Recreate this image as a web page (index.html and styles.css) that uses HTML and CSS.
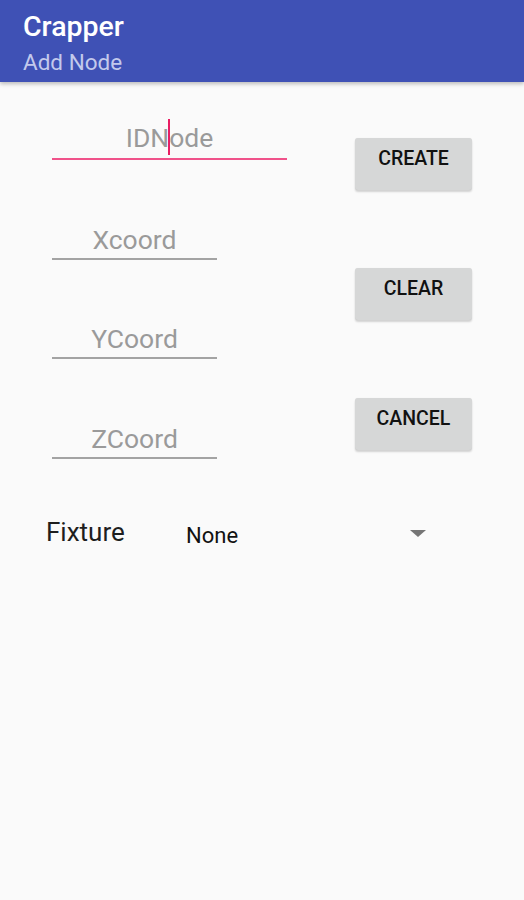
FILE: index.html
```html
<!DOCTYPE html>
<html lang="en">
<head>
    <meta charset="UTF-8">
    <meta name="viewport" content="width=device-width, initial-scale=1.0">
    <title>Crapper - Add Node</title>
    <link rel="stylesheet" href="styles.css">
</head>
<body>
    <header class="appbar">
        <div class="title">Crapper</div>
        <div class="subtitle">Add Node</div>
    </header>

    <main class="form">
        <div class="columns">
            <div class="fields">
                <div class="field field-wide focused">
                    <span class="hint">IDN<span class="caret"></span>ode</span>
                </div>
                <div class="field">
                    <span class="hint">Xcoord</span>
                </div>
                <div class="field">
                    <span class="hint">YCoord</span>
                </div>
                <div class="field">
                    <span class="hint">ZCoord</span>
                </div>
            </div>

            <div class="actions">
                <button class="btn">CREATE</button>
                <button class="btn">CLEAR</button>
                <button class="btn">CANCEL</button>
            </div>
        </div>

        <div class="fixture-row">
            <div class="fixture-label">Fixture</div>
            <div class="spinner">
                <span class="spinner-value">None</span>
                <span class="spinner-arrow"></span>
            </div>
        </div>
    </main>
</body>
</html>
```

FILE: styles.css
```css
body {
    margin: 0;
    font-family: Roboto, "Liberation Sans", sans-serif;
    background-color: #fafafa;
    height: 900px;
}

.appbar {
    height: 82px;
    box-sizing: border-box;
    padding: 12px 0 0 23px;
    background-color: #3f51b5;
    box-shadow: 0 2px 4px rgba(0, 0, 0, 0.25);
}

.title {
    font-size: 28.5px;
    line-height: 30px;
    font-weight: 500;
    color: #fff;
}

.subtitle {
    margin-top: 7px;
    font-size: 22.5px;
    line-height: 26px;
    color: #c3c9ec;
}

.form {
    padding-top: 38px;
}

.columns {
    display: flex;
    align-items: flex-start;
}

.fields {
    display: flex;
    flex-direction: column;
    gap: 59.5px;
    width: 235px;
    margin-left: 52px;
}

.field {
    width: 165px;
    height: 40px;
    box-sizing: border-box;
    padding-bottom: 4px;
    display: flex;
    align-items: flex-end;
    justify-content: center;
    border-bottom: 2px solid #a3a3a3;
}

.field-wide {
    width: 235px;
    padding-bottom: 3px;
}

.field.focused {
    border-bottom-color: #f0528a;
}

.hint {
    font-size: 26.5px;
    line-height: 28px;
    color: #9a9a9a;
}

.caret {
    display: inline-block;
    width: 2px;
    height: 36px;
    margin: 0 -1px;
    vertical-align: -8px;
    background-color: #e91e63;
}

.actions {
    display: flex;
    flex-direction: column;
    gap: 78px;
    margin: 18px 0 0 68px;
}

.btn {
    width: 117px;
    height: 52px;
    padding: 10px 0 0;
    display: flex;
    justify-content: center;
    align-items: flex-start;
    font-family: Roboto, "Liberation Sans", sans-serif;
    font-size: 19.5px;
    line-height: 22px;
    font-weight: 500;
    color: #111;
    background-color: #d6d7d7;
    border: none;
    border-radius: 3px;
    box-shadow: 0 2px 2px rgba(0, 0, 0, 0.16), 0 0 1px rgba(0, 0, 0, 0.1);
}

.fixture-row {
    display: flex;
    align-items: flex-start;
    margin-top: 58px;
    padding-left: 46px;
}

.fixture-label {
    width: 140px;
    font-size: 26px;
    line-height: 30px;
    color: #1e1e1e;
}

.spinner {
    width: 240px;
    height: 26px;
    padding-top: 6px;
    display: flex;
    align-items: center;
    justify-content: space-between;
}

.spinner-value {
    font-size: 22px;
    line-height: 26px;
    color: #111;
}

.spinner-arrow {
    width: 0;
    height: 0;
    margin-bottom: 4px;
    border-left: 8px solid transparent;
    border-right: 8px solid transparent;
    border-top: 7px solid #757575;
}
```
